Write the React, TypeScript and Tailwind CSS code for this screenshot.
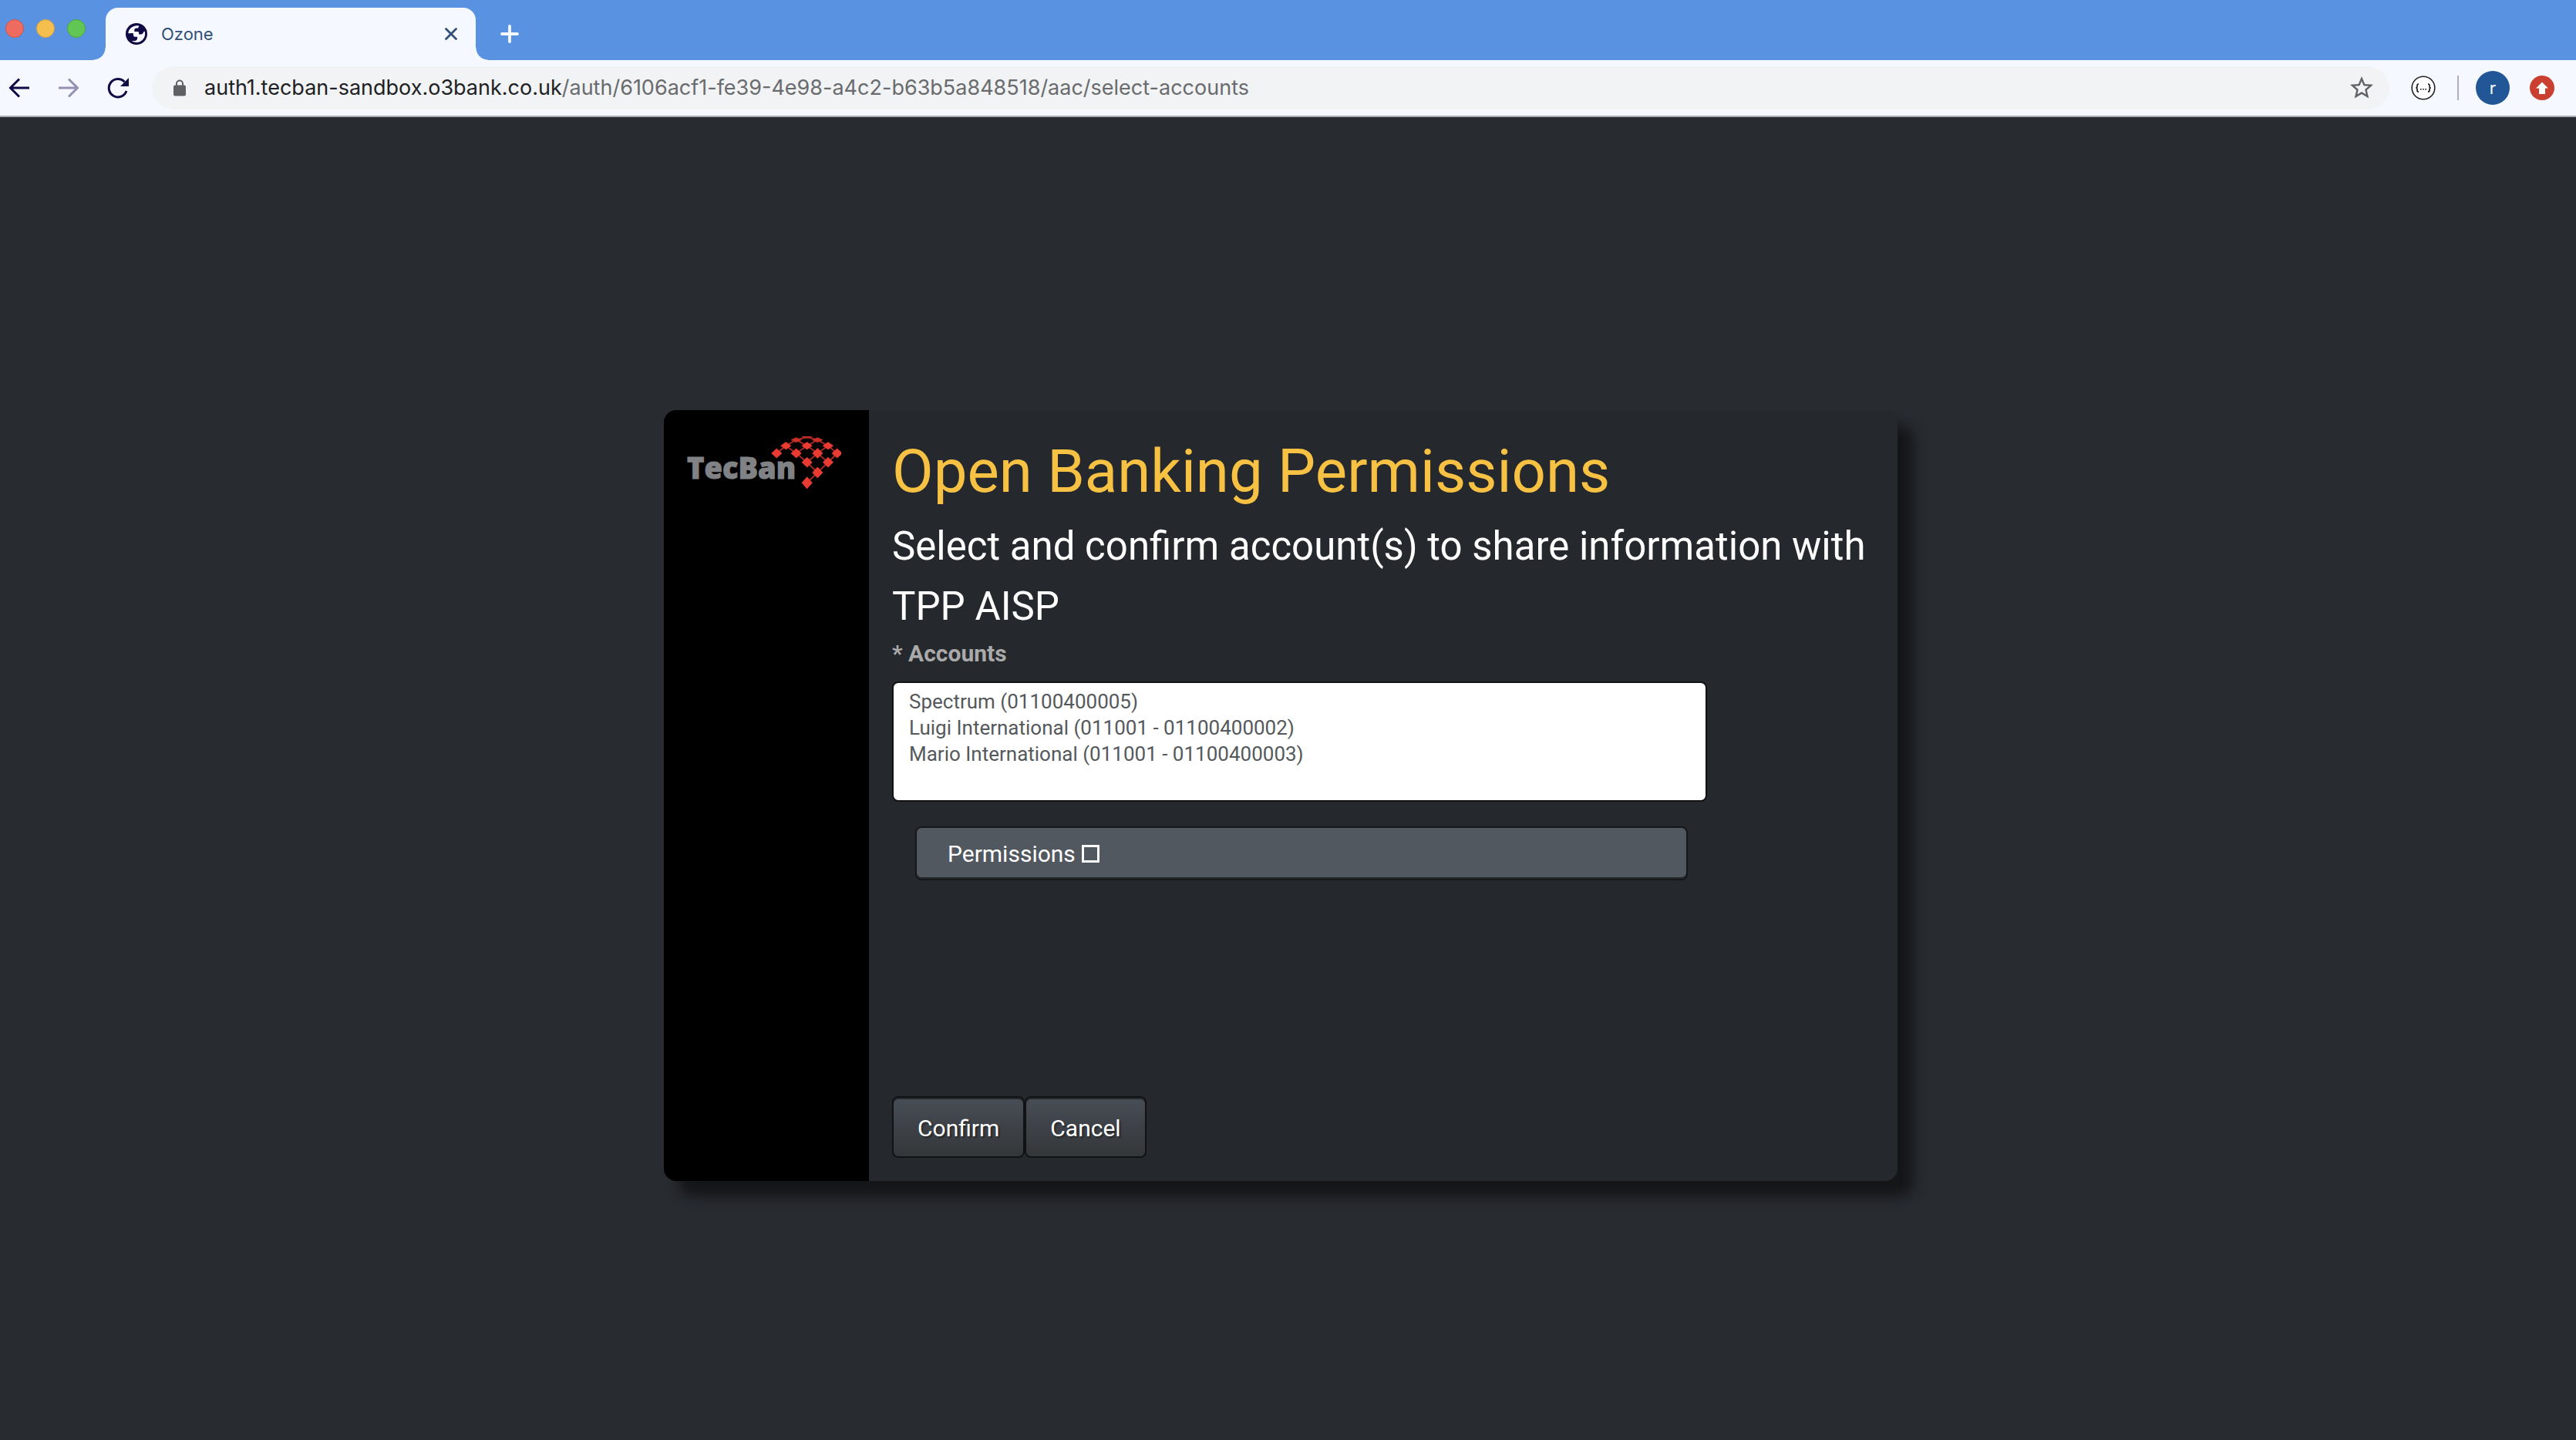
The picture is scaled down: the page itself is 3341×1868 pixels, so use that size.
import React from "react";
import { MdStarBorder } from "react-icons/md";

const inter = "font-['Inter','Liberation_Sans',sans-serif]";
const roboto = "font-['Roboto','Liberation_Sans',sans-serif]";

const accounts = [
  "Spectrum (01100400005)",
  "Luigi International (011001 - 01100400002)",
  "Mario International (011001 - 01100400003)",
];

const diamonds: [number, number, number][] = [
  [116.3, 22, 6], [128.3, 12.3, 4.7], [141.7, 4.7, 3], [155.7, 0.8, 1.4],
  [141.7, 22, 6], [155.7, 12.3, 4.7], [169.3, 4.7, 3], [183, 12.3, 4.7],
  [169.3, 22, 6.4], [194.7, 22, 6], [155.7, 33.7, 6.4], [183, 33.7, 6.4],
  [169.3, 47, 7], [155.7, 60.3, 7.6],
];

function TecBanLogo() {
  return (
    <svg viewBox="0 0 200 68" className="block w-[200px] max-w-full" role="img" aria-label="TecBan">
      <text x="0" y="55" fill="#808285" stroke="#808285" strokeWidth="1" fontFamily="'Open Sans','Noto Sans',sans-serif" fontWeight="800" fontSize="38">
        TecBan
      </text>
      <path
        d="M116.3 22 128.3 12.3 141.7 4.7 155.7 1 169.3 4.7 183 12.3 194.7 22 183 33.7 169.3 47 155.7 60.3M128.3 12.3 141.7 22 155.7 33.7 169.3 47M141.7 22 155.7 12.3 169.3 4.7M141.7 4.7 155.7 12.3 169.3 22 183 33.7M155.7 33.7 169.3 22 183 12.3"
        fill="none" stroke="#a32822" strokeWidth="2"
      />
      {diamonds.map(([x, y, h], i) => (
        <path key={i} d={`M${x - 6.6} ${y}L${x} ${y - h}L${x + 6.6} ${y}L${x} ${y + h}Z`} fill={h < 4 ? "#c8302a" : "#ea3b33"} stroke={h < 4 ? "#c8302a" : "#ea3b33"} strokeWidth="0.8" strokeLinejoin="round" />
      ))}
    </svg>
  );
}

function GlobeIcon() {
  return (
    <svg viewBox="0 0 28 28" className="size-7 shrink-0" aria-hidden="true">
      <circle cx="14" cy="14" r="14" fill="#100b45" />
      <path d="M3.3 13.2C3.5 8.3 7.4 4 14 3.2c1.2-.1 2.2 0 3.2.3l-1 2.9h-2.5c-1.4 0-2.4 1-2.4 2.3v2.4h4.2c1.2 0 1.6.7 1.6 1.8v1.6h2.2c1.6 0 2.9-.8 3.6-2.3l.8-1.4h1c.3 1 .4 2.1.4 3.2 0 6-4.9 11-11.1 11-2 0-3.9-.5-5.5-1.4v-.6h3.2c2 0 3.4-1.3 3.4-3.2v-2h-2.3c-1.8 0-2.8-1-2.9-2.6l-.1-2.2z" fill="#f5f9ff" />
    </svg>
  );
}

function TitleBar() {
  return (
    <header className="flex h-[78px] items-end bg-[#5a92e2] pl-[7px]">
      <div className="mb-[29px] flex gap-4">
        <button aria-label="Close window" className="size-6 rounded-full border border-[#cf5449] bg-[#ed6b5f]" />
        <button aria-label="Minimise window" className="size-6 rounded-full border border-[#d6a03c] bg-[#f5bf50]" />
        <button aria-label="Zoom window" className="size-6 rounded-full border border-[#4aa63c] bg-[#62c655]" />
      </div>
      <div className="relative ml-[26px] flex h-[68px] w-[480px] items-center rounded-t-2xl bg-[#f5f9ff] pl-[26px] pr-6">
        <span className="absolute bottom-0 -left-4 size-4 bg-[radial-gradient(circle_at_0_0,transparent_15px,#f5f9ff_16px)]" />
        <span className="absolute -right-4 bottom-0 size-4 bg-[radial-gradient(circle_at_100%_0,transparent_15px,#f5f9ff_16px)]" />
        <GlobeIcon />
        <span className="ml-[18px] flex-1 text-[22px] leading-8 text-[#314f77]">Ozone</span>
        <button aria-label="Close tab">
          <svg viewBox="0 0 16 16" className="size-4" aria-hidden="true">
            <path d="M1.5 1.5l13 13M14.5 1.5l-13 13" stroke="#314f77" strokeWidth="2.8" strokeLinecap="round" />
          </svg>
        </button>
      </div>
      <button aria-label="New tab" className="mb-[22px] ml-8">
        <svg viewBox="0 0 24 24" className="size-6" aria-hidden="true">
          <path d="M12 2v20M2 12h20" stroke="#f5f9ff" strokeWidth="3.8" strokeLinecap="round" />
        </svg>
      </button>
    </header>
  );
}

function Toolbar() {
  return (
    <nav className="flex h-[74px] items-center border-b-2 border-[#a9abb0] bg-[#f5f9ff] pl-[11px] pr-7">
      <button aria-label="Back">
        <svg viewBox="0 0 28 28" className="size-7" aria-hidden="true">
          <path d="M14 2.5L2.5 14 14 25.5M2.5 14H27" fill="none" stroke="#100b45" strokeWidth="3" />
        </svg>
      </button>
      <button aria-label="Forward" className="ml-9">
        <svg viewBox="0 0 28 28" className="size-7" aria-hidden="true">
          <path d="M14 2.5L25.5 14 14 25.5M25.5 14H1" fill="none" stroke="#958fb2" strokeWidth="3" />
        </svg>
      </button>
      <button aria-label="Reload" className="ml-9">
        <svg viewBox="0 0 28 28" className="size-7" aria-hidden="true">
          <path d="M22.5 6.2A11.7 11.7 0 1 0 25 18" fill="none" stroke="#100b45" strokeWidth="3" />
          <path d="M28 1v11H17z" fill="#100b45" />
        </svg>
      </button>
      <div className="ml-[30px] flex h-14 flex-1 items-center rounded-full bg-[#f1f3f4] pl-7 pr-[18px]">
        <svg viewBox="0 0 16 22" className="h-[22px] w-4 shrink-0" aria-hidden="true">
          <path d="M4 9V5.5a4 4 0 0 1 8 0V9" fill="none" stroke="#5f6064" strokeWidth="2" />
          <rect y="7.5" width="16" height="14" rx="2" fill="#5f6064" />
        </svg>
        <span className="ml-6 flex-1 text-[27px] leading-10 text-[#202124]">
          auth1.tecban-sandbox.o3bank.co.uk
          <span className="text-[#696b6e]">/auth/6106acf1-fe39-4e98-a4c2-b63b5a848518/aac/select-accounts</span>
        </span>
        <button aria-label="Bookmark this page" className="text-[#5f6368]">
          <MdStarBorder className="size-9" />
        </button>
      </div>
      <button aria-label="JSON formatter" className="ml-7">
        <svg viewBox="0 0 32 32" className="size-8" aria-hidden="true">
          <circle cx="16" cy="16" r="14.8" fill="#fff" stroke="#222" strokeWidth="1.6" />
          <path d="M10 11c-1.500 0-2 .6-2 1.800v1.600c0 1-.5 1.600-1.700 1.600 1.200 0 1.700.6 1.700 1.600v1.600c0 1.200.5 1.800 2 1.800M22 11c1.500 0 2 .6 2 1.800v1.600c0 1 .5 1.600 1.700 1.600-1.200 0-1.700.6-1.700 1.600v1.600c0 1.200-.5 1.800-2 1.800" fill="none" stroke="#111" strokeWidth="1.6" />
          <path d="M12 17h1.6v1.6H12zM15.2 17h1.6v1.6h-1.6zM18.4 17H20v1.6h-1.6z" fill="#111" />
        </svg>
      </button>
      <span className="ml-7 h-8 w-0.5 bg-[#adadc8]" />
      <button aria-label="Profile" className="ml-[22px] size-11 rounded-full bg-[#215796] text-[22px] leading-[44px] text-white">
        r
      </button>
      <button aria-label="Update" className="ml-[26px]">
        <svg viewBox="0 0 32 32" className="size-8" aria-hidden="true">
          <circle cx="16" cy="16" r="16" fill="#cb3f31" />
          <path d="M16 8.5l8 8h-4v7.5h-8v-7.5H8z" fill="#fff" />
        </svg>
      </button>
    </nav>
  );
}

function ActionButton({ children }: { children: React.ReactNode }) {
  return (
    <button className="h-20 rounded-lg border-2 border-[#101214] bg-linear-to-b from-[#484e56] to-[#343639] px-[31px] pt-0.5 text-[30px] text-white shadow-[inset_0_2px_0_#25282c] text-shadow-[2px_2px_2px_rgba(0,0,0,0.4)]">
      {children}
    </button>
  );
}

export default function App() {
  return (
    <div className={`${inter} flex min-h-screen flex-col bg-[#282b30]`}>
      <TitleBar />
      <Toolbar />
      <main className={`${roboto} flex flex-1 items-center justify-center pr-[19px] pt-11`}>
        <section className="flex min-h-[1000px] w-full max-w-[1600px] overflow-hidden rounded-2xl bg-[#25282c] shadow-[20px_20px_16px_#151618]">
          <aside className="w-[266px] shrink-0 bg-black pl-[30px] pt-[34px]">
            <TecBanLogo />
          </aside>
          <form className="flex flex-1 flex-col px-[30px] pb-[30px] pt-8" onSubmit={(e) => e.preventDefault()}>
            <h1 className="text-[78px] leading-[96px] text-[#f7c143]">Open Banking Permissions</h1>
            <h2 className="mt-[10px] text-[51px] leading-[78px] text-white">
              Select and confirm account(s) to share information with TPP AISP
            </h2>
            <div className="w-[83%]">
              <label htmlFor="accounts" className="block text-[30px] font-bold leading-[44px] text-[#aaaaaa]">
                * Accounts
              </label>
              <select
                id="accounts"
                multiple
                size={4}
                className="mt-[14px] block h-[156px] w-full overflow-hidden rounded-lg border-2 border-[#101214] bg-white px-5 pt-[9px] text-[26px] text-[#55595c]"
              >
                {accounts.map((a) => (
                  <option key={a} className="h-[34px] p-0 leading-[34px]">
                    {a}
                  </option>
                ))}
              </select>
              <div className="ml-[30px] mr-[25px] mt-8">
                <button className="flex h-[70px] w-full items-center rounded-lg border-2 border-[#15171a] bg-[#52585f] pl-10 text-left text-[30px] text-white shadow-[inset_0_-2px_0_#23272a]">
                  Permissions
                  <span className="ml-2 size-[23px] border-[3px] border-white" aria-hidden="true" />
                </button>
              </div>
            </div>
            <div className="mt-auto flex">
              <ActionButton>Confirm</ActionButton>
              <ActionButton>Cancel</ActionButton>
            </div>
          </form>
        </section>
      </main>
    </div>
  );
}
